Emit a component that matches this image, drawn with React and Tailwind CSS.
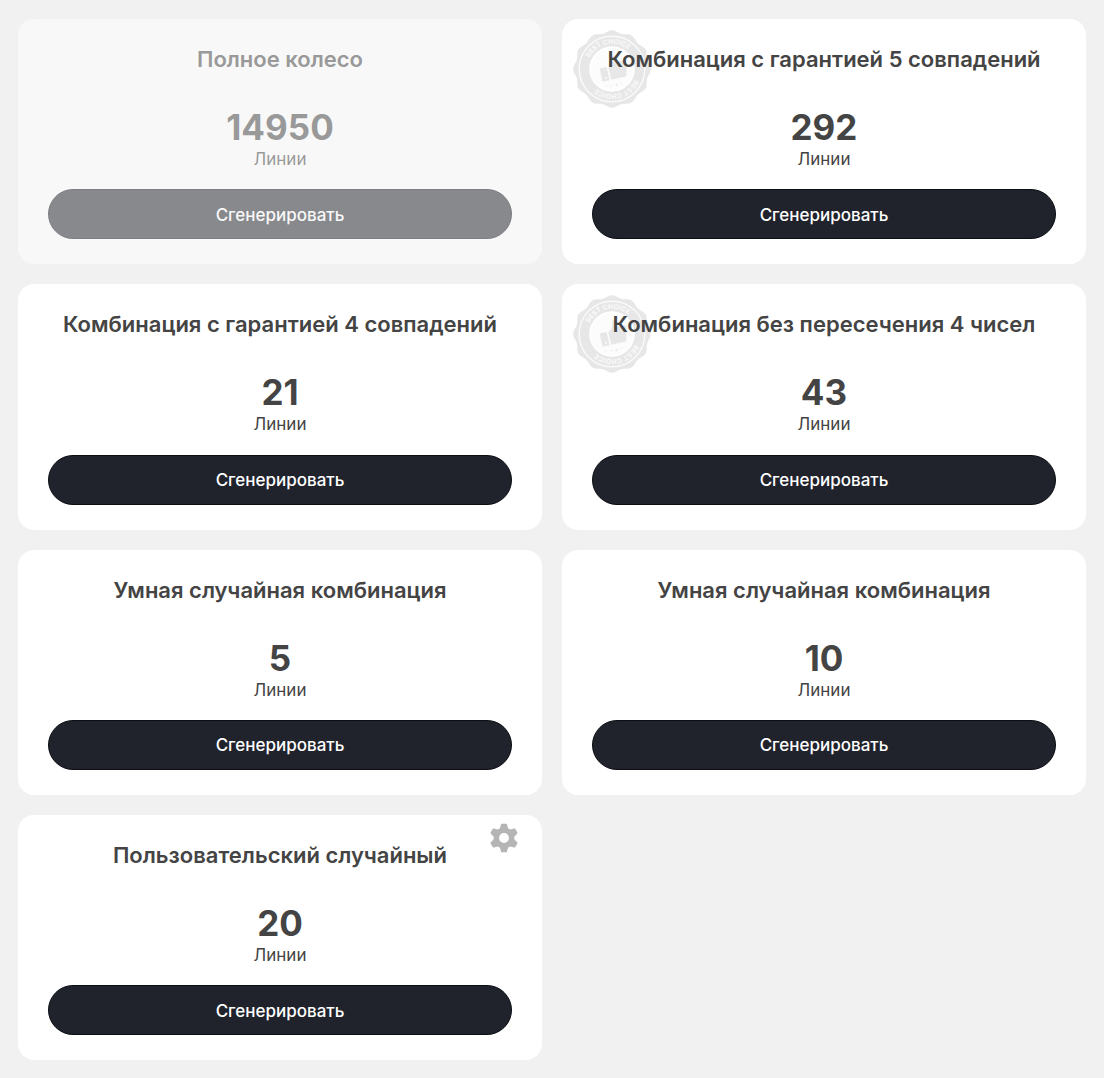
import React from "react";

const cards = [
  { id: "full", title: "Полное колесо", lines: 14950, disabled: true },
  { id: "match5", title: "Комбинация с гарантией 5 совпадений", lines: 292, best: true },
  { id: "match4", title: "Комбинация с гарантией 4 совпадений", lines: 21 },
  { id: "cross4", title: "Комбинация без пересечения 4 чисел", lines: 43, best: true },
  { id: "smart5", title: "Умная случайная комбинация", lines: 5 },
  { id: "smart10", title: "Умная случайная комбинация", lines: 10 },
  { id: "custom", title: "Пользовательский случайный", lines: 20, settings: true },
];

function sealOutline(lobes, radius, depth) {
  const points = [];
  for (let i = 0; i < 180; i++) {
    const a = (i * Math.PI) / 90;
    const r = radius + depth * Math.cos(lobes * (a + Math.PI / 2));
    points.push(`${(50 + r * Math.cos(a)).toFixed(2)} ${(50 + r * Math.sin(a)).toFixed(2)}`);
  }
  return `M${points.join("L")}Z`;
}

const sealPath = sealOutline(12, 47, 1.5);

function BestChoiceSeal({ id }) {
  return (
    <svg viewBox="0 0 100 100" className="absolute top-[10px] left-[10px] size-20" aria-hidden="true">
      <defs>
        <path id={`${id}-top`} d="M18.500 50a31.500 31.500 0 0 1 63 0" />
        <path id={`${id}-bottom`} d="M81.500 50a31.500 31.500 0 0 1 -63 0" />
      </defs>
      <path d={sealPath} fill="#e7e7e7" />
      <circle cx="50" cy="50" r="41" fill="none" stroke="#fafafa" strokeWidth="1.800" />
      <circle cx="50" cy="50" r="28.500" fill="#fff" />
      <circle cx="50" cy="50" r="26" fill="#fcfcfc" />
      <g fill="#fafafa" fontFamily="Inter, sans-serif" fontSize="8.500" fontWeight="700" textAnchor="middle">
        <text transform="rotate(-12 50 50)">
          <textPath href={`#${id}-top`} startOffset="50%">BEST CHOICE</textPath>
        </text>
        <text transform="rotate(-13 50 50)">
          <textPath href={`#${id}-bottom`} startOffset="50%">BEST CHOICE</textPath>
        </text>
      </g>
      <g transform="rotate(-13 50 50)" fill="#e7e7e7">
        <path d="M35 46h9v17h-9z" />
        <path d="M46 47l6-5 2-8c4-1 6 3 4 9h9c3 0 3 3 2 5l-3 13c0 1-1 2-3 2H46z" />
        <circle cx="40" cy="59" r="1.200" fill="#fff" />
      </g>
      <g fill="#ececec">
        <circle cx="43" cy="71" r="1" />
        <circle cx="49" cy="71" r="1" />
        <circle cx="56" cy="70" r="1.500" />
        <circle cx="62" cy="68" r="1" />
      </g>
    </svg>
  );
}

function GearIcon() {
  return (
    <svg viewBox="0 0 24 24" className="size-8" fill="#b5b5b5" aria-hidden="true">
      <path d="M9.700 1.800a.7.700 0 0 1 .7-.5h3.200a.7.700 0 0 1 .7.500l.7 2.900 1.700 1 2.900-.9a.7.700 0 0 1 .8.300l1.600 2.800a.7.700 0 0 1-.1.900l-2.200 2.200v2l2.200 2.200a.7.700 0 0 1 .1.900l-1.600 2.800a.7.700 0 0 1-.8.300l-2.900-.9-1.700 1-.7 2.900a.7.700 0 0 1-.7.500h-3.200a.7.700 0 0 1-.7-.5L9 19.300l-1.700-1-2.900.9a.7.700 0 0 1-.8-.3L2 16.100a.7.700 0 0 1 .1-.9L4.300 13v-2L2.100 8.800A.7.700 0 0 1 2 7.900l1.600-2.800a.7.700 0 0 1 .8-.3l2.900.9 1.700-1zM12 8.300a3.700 3.700 0 1 0 0 7.400 3.700 3.700 0 1 0 0-7.400z" />
    </svg>
  );
}

function Card({ id, title, lines, disabled, best, settings }) {
  return (
    <section
      aria-labelledby={`${id}-title`}
      className={`relative flex flex-col rounded-2xl bg-white px-[30px] pt-[26px] pb-[25px] text-center text-[#444] ${disabled ? "opacity-50" : ""}`}
    >
      {best && <BestChoiceSeal id={id} />}
      {settings && (
        <button type="button" aria-label="Настройки" className="absolute top-[7px] right-[22px]">
          <GearIcon />
        </button>
      )}
      <h2 id={`${id}-title`} className="relative text-[22px] leading-7 font-semibold">{title}</h2>
      <p className="mt-9 text-[35px] leading-9 font-bold">{lines}</p>
      <p className="mt-0.5 text-[17px] leading-6">Линии</p>
      <button
        type="button"
        disabled={disabled}
        className="mt-auto h-[50px] w-full rounded-full border border-[#0c0e14] bg-[#20232c] pt-px text-[17px] leading-6 font-medium text-white"
      >
        Сгенерировать
      </button>
    </section>
  );
}

export default function App() {
  return (
    <main className="grid min-h-screen grid-cols-2 gap-5 bg-[#f1f1f1] px-[18px] pt-[19px] pb-[18px] font-['Inter',sans-serif]">
      {cards.map((card) => (
        <Card key={card.id} {...card} />
      ))}
    </main>
  );
}
